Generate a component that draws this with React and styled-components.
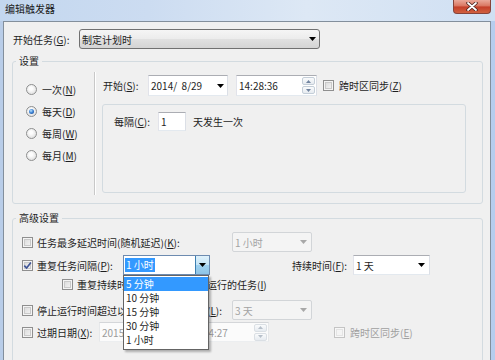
import React from "react";
import styled, { createGlobalStyle } from "styled-components";

const GlobalStyle = createGlobalStyle`
  *, *::before, *::after {
    box-sizing: border-box;
  }
  html, body {
    margin: 0;
    padding: 0;
  }
  body {
    font-family: "Noto Sans CJK SC", "Noto Sans", sans-serif;
    font-size: 10px;
    color: #1e1e1e;
    background: #c2d6ee;
  }
  u {
    text-decoration: underline;
    text-underline-offset: 1px;
  }
`;

const Frame = styled.div`
  width: 495px;
  height: 360px;
  overflow: hidden;
  display: flex;
  flex-direction: column;
  background: linear-gradient(90deg, #b9cde8 0%, #c9daef 50%, #b6cdee 100%);
`;

const TitleBar = styled.div`
  flex: none;
  height: 21px;
  display: flex;
  justify-content: space-between;
  align-items: flex-start;
  padding: 0 4px;
  background: linear-gradient(90deg, #c3d7ef 0%, #ccdcf1 30%, #dde8f5 62%, #d0e0f3 100%);
`;

const Title = styled.div`
  line-height: 18px;
  padding-left: 1px;
  color: #1a1a1a;
`;

const CloseBtn = styled.div`
  width: 38px;
  height: 14px;
  border: 1px solid #86433a;
  border-top: none;
  border-radius: 0 0 4px 4px;
  background: linear-gradient(#eaa899 0%, #db7b66 42%, #c5402a 55%, #d0603f 100%);
  display: flex;
  align-items: center;
  justify-content: center;
`;

const Body = styled.div`
  flex: 1;
  margin: 0 4px 0 3px;
  border: 1px solid #838f9c;
  border-bottom: none;
  background: #f0f0f0;
  padding: 7px 7px 0 8px;
`;

const TopRow = styled.div`
  display: flex;
  align-items: center;
  height: 20px;
  padding-left: 1px;
`;

const FieldLabel = styled.span`
  flex: none;
  width: ${(p) => (p.$w ? `${p.$w}px` : "auto")};
  margin-left: ${(p) => p.$ml || 0}px;
  white-space: nowrap;
  color: ${(p) => (p.$disabled ? "#a0a0a0" : "inherit")};
`;

const SelectButton = styled.div`
  flex: none;
  width: ${(p) => p.$w}px;
  height: 20px;
  border: 1px solid #707070;
  border-radius: 3px;
  background: linear-gradient(#f5f5f5 0%, #ececec 48%, #e0e0e0 52%, #d4d4d4 100%);
  display: flex;
  align-items: center;
  justify-content: space-between;
  padding: 0 3px 0 2px;
`;

const Group = styled.fieldset`
  margin: ${(p) => p.$mt}px 0 0 0;
  padding: ${(p) => p.$pad};
  border: 1px solid #d3dbe0;
  border-radius: 3px;
  min-width: 0;
`;

const GroupTitle = styled.legend`
  margin-left: 3px;
  padding: 0 3px;
  height: 14px;
  line-height: 14px;
`;

const SettingsBody = styled.div`
  display: flex;
  height: 123px;
`;

const RadioCol = styled.div`
  flex: none;
  width: 81px;
  display: flex;
  flex-direction: column;
  gap: 8px;
  padding: 10px 0 0 13px;
`;

const RadioRow = styled.div`
  display: flex;
  align-items: center;
  gap: 5px;
  height: 14px;
`;

const RadioDot = styled.span`
  flex: none;
  width: 11px;
  height: 11px;
  border-radius: 50%;
  border: 1px solid #8e8f8f;
  background: radial-gradient(circle at 45% 40%, #fdfdfd 20%, #d4d4d4 100%);
  display: flex;
  align-items: center;
  justify-content: center;

  &::after {
    content: "";
    display: ${(p) => (p.$on ? "block" : "none")};
    width: 5px;
    height: 5px;
    border-radius: 50%;
    background: radial-gradient(circle at 40% 35%, #bfe6ff 0%, #3d84d6 45%, #163f85 100%);
  }
`;

const VSep = styled.div`
  flex: none;
  width: 2px;
  border-left: 1px solid #c8c8c8;
  border-right: 1px solid #ffffff;
`;

const RightPanel = styled.div`
  flex: none;
  width: 370px;
  padding: 3px 0 0 6px;
`;

const FormRow = styled.div`
  display: flex;
  align-items: center;
  height: ${(p) => p.$h || 21}px;
`;

const TextBox = styled.div`
  flex: none;
  position: relative;
  width: ${(p) => p.$w}px;
  height: ${(p) => p.$h || 21}px;
  margin-left: ${(p) => p.$ml || 0}px;
  background: ${(p) => (p.$disabled ? "#fbfbfb" : "#ffffff")};
  border: 1px solid;
  border-color: ${(p) =>
    p.$disabled ? "#d4d6d9 #e6e8ea #eceef0 #e6e8ea" : "#abadb3 #dbdfe6 #e3e9ef #e2e3ea"};
  color: ${(p) => (p.$disabled ? "#9c9c9c" : "inherit")};
  display: flex;
  align-items: center;
  justify-content: space-between;
  padding: 0 ${(p) => (p.$pr === undefined ? 3 : p.$pr)}px 0 2px;
  white-space: pre;
`;

const Spinner = styled.div`
  display: flex;
  flex-direction: column;
  gap: 1px;
  width: 13px;
  height: 17px;
`;

const SpinBtn = styled.div`
  flex: 1;
  border: 1px solid ${(p) => (p.$disabled ? "#dadfe4" : "#c4ced8")};
  border-radius: 2px;
  background: linear-gradient(#fafbfc, #e6ebf0);
  display: flex;
  align-items: center;
  justify-content: center;
`;

const SubPanel = styled.div`
  margin-top: 8px;
  height: 89px;
  border: 1px solid #d3dbe0;
  border-radius: 3px;
  padding: 7px 0 0 11px;
`;

const CheckItem = styled.span`
  display: flex;
  align-items: center;
  gap: ${(p) => p.$gap || 4}px;
  flex: none;
  width: ${(p) => (p.$w ? `${p.$w}px` : "auto")};
  margin-left: ${(p) => p.$ml || 0}px;
  white-space: nowrap;
  color: ${(p) => (p.$disabled ? "#a0a0a0" : "inherit")};
`;

const CheckBox = styled.span`
  flex: none;
  width: 11px;
  height: 11px;
  border: 1px solid ${(p) => (p.$disabled ? "#c4c4c4" : "#8f8f8f")};
  background: ${(p) =>
    p.$disabled ? "#f4f4f4" : "linear-gradient(135deg, #d6d6d6 0%, #f8f8f8 100%)"};
  box-shadow: inset 0 0 0 1px ${(p) => (p.$disabled ? "#f7f7f7" : "#f4f4f4")},
    inset 0 0 0 2px ${(p) => (p.$disabled ? "#e4e4e4" : "#c9c9c9")};
  display: flex;
  align-items: center;
  justify-content: center;
`;

const AdvBody = styled.div`
  display: flex;
  flex-direction: column;
  padding: 7px 0 40px 9px;
`;

const AdvRow = styled.div`
  position: relative;
  display: flex;
  align-items: center;
  height: ${(p) => p.$h || 20}px;
  margin-top: ${(p) => p.$mt || 0}px;
  padding-left: ${(p) => p.$indent || 0}px;
`;

const DisabledCombo = styled.div`
  flex: none;
  width: ${(p) => p.$w}px;
  height: 20px;
  border: 1px solid #d2d5d8;
  border-radius: 2px;
  background: #f4f4f4;
  color: #a3a3a3;
  display: flex;
  align-items: center;
  justify-content: space-between;
  padding: 0 4px 0 2px;
`;

const ComboWrap = styled.div`
  position: relative;
  flex: none;
  width: ${(p) => p.$w}px;
  height: 20px;
  margin-left: ${(p) => p.$ml || 0}px;
`;

const EditCombo = styled.div`
  width: 100%;
  height: 100%;
  border: 1px solid #6d8bb0;
  background: #ffffff;
  display: flex;
  align-items: center;
  justify-content: space-between;
  padding-left: 1px;
`;

const SelText = styled.span`
  background: #3399ff;
  color: #ffffff;
  padding: 0 1px;
  line-height: 14px;
`;

const DropBtn = styled.div`
  width: 14px;
  height: 100%;
  border-left: 1px solid #3c7fb1;
  background: linear-gradient(#dff1fb 0%, #c3e4f6 50%, #9fd1ef 51%, #8fc4e6 100%);
  display: flex;
  align-items: center;
  justify-content: center;
`;

const DropList = styled.div`
  position: absolute;
  top: 100%;
  left: 0;
  width: 86px;
  z-index: 5;
  background: #ffffff;
  border: 1px solid #646464;
  box-shadow: 2px 2px 2px rgba(0, 0, 0, 0.28);
  padding: 1px 0 2px;
`;

const DropItem = styled.div`
  height: 14px;
  line-height: 14px;
  padding-left: 2px;
  white-space: pre;
  background: ${(p) => (p.$active ? "#3399ff" : "transparent")};
  color: ${(p) => (p.$active ? "#ffffff" : "#1e1e1e")};
`;

const Arrow = ({ color = "#000" }) => (
  <svg width="7" height="4" viewBox="0 0 7 4">
    <polygon points="0,0 7,0 3.5,4" fill={color} />
  </svg>
);

const SpinArrow = ({ up, color = "#7184a0" }) => (
  <svg width="5" height="3" viewBox="0 0 5 3">
    <polygon points={up ? "0,3 5,3 2.5,0" : "0,0 5,0 2.5,3"} fill={color} />
  </svg>
);

const Tick = () => (
  <svg width="9" height="9" viewBox="0 0 9 9">
    <path d="M1.3 4.6 L3.6 7.1 L7.9 1.4" fill="none" stroke="#3f5597" strokeWidth="1.6" />
  </svg>
);

const Check = ({ on, disabled }) => (
  <CheckBox $disabled={disabled}>{on && <Tick />}</CheckBox>
);

const Spin = ({ disabled }) => {
  const c = disabled ? "#b7c0ca" : "#7184a0";
  return (
    <Spinner>
      <SpinBtn $disabled={disabled}>
        <SpinArrow up color={c} />
      </SpinBtn>
      <SpinBtn $disabled={disabled}>
        <SpinArrow color={c} />
      </SpinBtn>
    </Spinner>
  );
};

const CloseGlyph = () => (
  <svg width="12" height="9" viewBox="0 0 12 9">
    <path d="M2 1 L10 8 M10 1 L2 8" stroke="#4a201b" strokeWidth="3.4" strokeLinecap="round" />
    <path d="M2 1 L10 8 M10 1 L2 8" stroke="#ffffff" strokeWidth="1.8" strokeLinecap="round" />
  </svg>
);

const schedules = [
  { text: "一次", key: "N" },
  { text: "每天", key: "D", on: true },
  { text: "每周", key: "W" },
  { text: "每月", key: "M" },
];

const intervals = ["5 分钟", "10 分钟", "15 分钟", "30 分钟", "1 小时"];

export default function App() {
  return (
    <Frame>
      <GlobalStyle />
      <TitleBar>
        <Title>编辑触发器</Title>
        <CloseBtn>
          <CloseGlyph />
        </CloseBtn>
      </TitleBar>

      <Body>
        <TopRow>
          <FieldLabel $w={66}>
            开始任务(<u>G</u>):
          </FieldLabel>
          <SelectButton $w={241}>
            <span>制定计划时</span>
            <Arrow />
          </SelectButton>
        </TopRow>

        <Group $mt={5} $pad="4px 0 8px 0">
          <GroupTitle>设置</GroupTitle>
          <SettingsBody>
            <RadioCol>
              {schedules.map((s) => (
                <RadioRow key={s.key}>
                  <RadioDot $on={s.on} />
                  <span>
                    {s.text}(<u>{s.key}</u>)
                  </span>
                </RadioRow>
              ))}
            </RadioCol>
            <VSep />
            <RightPanel>
              <FormRow>
                <FieldLabel $w={45} $ml={1}>
                  开始(<u>S</u>):
                </FieldLabel>
                <TextBox $w={80}>
                  <span>2014/  8/29</span>
                  <Arrow />
                </TextBox>
                <TextBox $w={81} $ml={8} $pr={1}>
                  <span>14:28:36</span>
                  <Spin />
                </TextBox>
                <CheckItem $ml={6} $gap={5}>
                  <Check />
                  <span>
                    跨时区同步(<u>Z</u>)
                  </span>
                </CheckItem>
              </FormRow>
              <SubPanel>
                <FormRow $h={19}>
                  <FieldLabel $w={44}>
                    每隔(<u>C</u>):
                  </FieldLabel>
                  <TextBox $w={28} $h={19}>
                    <span>1</span>
                  </TextBox>
                  <FieldLabel $ml={7}>天发生一次</FieldLabel>
                </FormRow>
              </SubPanel>
            </RightPanel>
          </SettingsBody>
        </Group>

        <Group $mt={7} $pad="0">
          <GroupTitle>高级设置</GroupTitle>
          <AdvBody>
            <AdvRow>
              <CheckItem $w={210}>
                <Check />
                <span>
                  任务最多延迟时间(随机延迟)(<u>K</u>):
                </span>
              </CheckItem>
              <DisabledCombo $w={80}>
                <span>1 小时</span>
                <Arrow color="#a8a8a8" />
              </DisabledCombo>
            </AdvRow>

            <AdvRow $mt={3}>
              <CheckItem $w={101}>
                <Check on />
                <span>
                  重复任务间隔(<u>P</u>):
                </span>
              </CheckItem>
              <ComboWrap $w={87}>
                <EditCombo>
                  <SelText>1 小时</SelText>
                  <DropBtn>
                    <Arrow />
                  </DropBtn>
                </EditCombo>
                <DropList>
                  {intervals.map((v, i) => (
                    <DropItem key={v} $active={i === 0}>
                      {v}
                    </DropItem>
                  ))}
                </DropList>
              </ComboWrap>
              <FieldLabel $w={61} $ml={82}>
                持续时间(<u>F</u>):
              </FieldLabel>
              <TextBox $w={77} $h={20} $pr={4}>
                <span>1 天</span>
                <Arrow />
              </TextBox>
            </AdvRow>

            <AdvRow $mt={1} $h={16} $indent={40}>
              <CheckItem>
                <Check />
                <span>
                  重复持续时间结束时停止所有运行的任务(<u>I</u>)
                </span>
              </CheckItem>
            </AdvRow>

            <AdvRow $mt={8}>
              <CheckItem $w={210}>
                <Check />
                <span>
                  停止运行时间超过以下时间长度的任务(<u>L</u>):
                </span>
              </CheckItem>
              <DisabledCombo $w={80}>
                <span>3 天</span>
                <Arrow color="#a8a8a8" />
              </DisabledCombo>
            </AdvRow>

            <AdvRow $mt={2}>
              <CheckItem $w={77}>
                <Check />
                <span>
                  过期日期(<u>X</u>):
                </span>
              </CheckItem>
              <TextBox $w={83} $h={20} $disabled>
                <span>2015/  8/29</span>
                <Arrow color="#a8a8a8" />
              </TextBox>
              <TextBox $w={83} $h={20} $ml={4} $pr={1} $disabled>
                <span>14:24:27</span>
                <Spin disabled />
              </TextBox>
              <CheckItem $ml={65} $gap={5} $disabled>
                <Check disabled />
                <span>
                  跨时区同步(<u>E</u>)
                </span>
              </CheckItem>
            </AdvRow>
          </AdvBody>
        </Group>
      </Body>
    </Frame>
  );
}
